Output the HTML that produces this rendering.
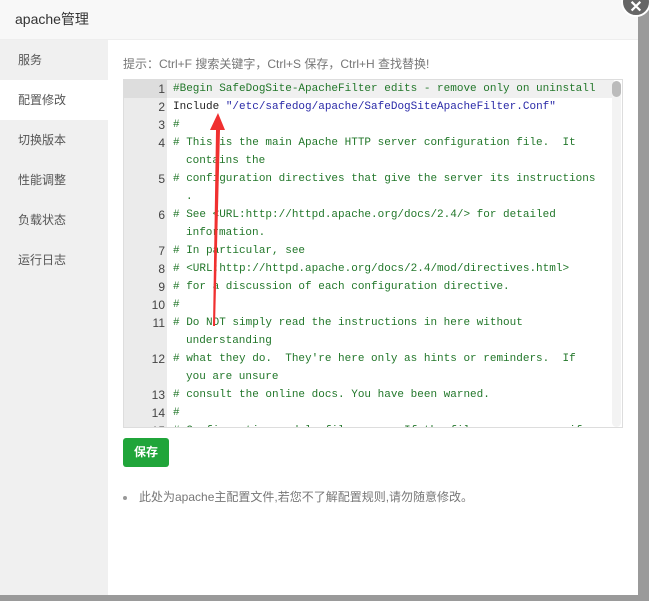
<!DOCTYPE html>
<html><head><meta charset="utf-8"><style>
*{margin:0;padding:0;box-sizing:border-box}
body{width:649px;height:601px;overflow:hidden;background:#9a9a9a;font-family:"Liberation Sans","Noto Sans CJK SC",sans-serif;position:relative}
.win{position:absolute;left:0;top:0;width:638px;height:595px;background:#fff}
.hd{height:40px;background:#f8f8f8;border-bottom:1px solid #eee;font-size:14px;color:#333;line-height:39px;padding-left:15px}
.side{position:absolute;left:0;top:40px;width:108px;bottom:0;background:#f0f0f0}
.side div{height:40px;line-height:40px;padding-left:18px;font-size:12px;color:#555}
.side .on{background:#fff}
.tip{position:absolute;left:123px;top:55px;font-size:12px;color:#777}
.ed{position:absolute;left:123px;top:79px;width:500px;height:349px;border:1px solid #ddd;overflow:hidden;background:#fff}
.gut{position:absolute;left:0;top:0;width:43px;height:100%;background:#ebebeb}
.code{position:absolute;left:0;top:0;font-family:"Liberation Mono",monospace;font-size:11px;line-height:18px;width:490px}
.l{position:relative;padding-left:49px;color:#22772a;white-space:pre-wrap}
.l .n{position:absolute;left:0;width:41px;text-align:right;color:#444;font-family:"Liberation Sans",sans-serif;font-size:12px}
.w{padding-left:62px}
.act{background:#f0f0f0}
.act .n{background:#ddd;width:43px;padding-right:2px}
.sb{position:absolute;right:1px;top:1px;width:9px;height:346px;background:#f3f3f3;border-radius:5px}
.sb i{display:block;height:16px;background:#bbb;border-radius:5px}
.btn{position:absolute;left:123px;top:438px;width:46px;height:29px;background:#20a53a;border-radius:3px;color:#fff;font-size:12px;font-weight:bold;text-align:center;line-height:29px}
.note{position:absolute;left:123px;top:488px;font-size:12px;color:#777}
.note b{display:inline-block;width:4px;height:4px;background:#999;border-radius:2px;margin-right:12px;vertical-align:middle}
.x{position:absolute;left:621px;top:-13px;width:30px;height:30px;border-radius:50%;background:#666;border:2px solid #fff;color:#fff;font-size:16px;line-height:38px;text-align:center;font-weight:bold}
</style></head><body>
<div class="win">
<div class="hd">apache管理</div>
<div class="side"><div>服务</div><div class="on">配置修改</div><div>切换版本</div><div>性能调整</div><div>负载状态</div><div>运行日志</div></div>
<div class="tip">提示：Ctrl+F 搜索关键字，Ctrl+S 保存，Ctrl+H 查找替换!</div>
<div class="ed"><div class="gut"></div>
<div class="code">
<div class="l act" style="margin-top:0"><span class="n">1</span>#Begin SafeDogSite-ApacheFilter edits - remove only on uninstall</div>
<div class="l" style="color:#222"><span class="n">2</span>Include <span style="color:#2a2aa8">"/etc/safedog/apache/SafeDogSiteApacheFilter.Conf"</span></div>
<div class="l"><span class="n">3</span>#</div>
<div class="l"><span class="n">4</span># This is the main Apache HTTP server configuration file.  It</div>
<div class="l w">contains the</div>
<div class="l"><span class="n">5</span># configuration directives that give the server its instructions</div>
<div class="l w">.</div>
<div class="l"><span class="n">6</span># See &lt;URL:http://httpd.apache.org/docs/2.4/&gt; for detailed</div>
<div class="l w">information.</div>
<div class="l"><span class="n">7</span># In particular, see</div>
<div class="l"><span class="n">8</span># &lt;URL:http://httpd.apache.org/docs/2.4/mod/directives.html&gt;</div>
<div class="l"><span class="n">9</span># for a discussion of each configuration directive.</div>
<div class="l"><span class="n">10</span>#</div>
<div class="l"><span class="n">11</span># Do NOT simply read the instructions in here without</div>
<div class="l w">understanding</div>
<div class="l"><span class="n">12</span># what they do.  They're here only as hints or reminders.  If</div>
<div class="l w">you are unsure</div>
<div class="l"><span class="n">13</span># consult the online docs. You have been warned.</div>
<div class="l"><span class="n">14</span>#</div>
<div class="l"><span class="n">15</span># Configuration and logfile names: If the filenames you specify</div>
</div>
<div class="sb"><i></i></div>
</div>
<div class="btn">保存</div>
<div class="note"><b></b>此处为apache主配置文件,若您不了解配置规则,请勿随意修改。</div>
</div>
<div class="x">✕</div>
<svg style="position:absolute;left:0;top:0" width="649" height="601"><polygon points="213,326 215,326 220,130 225,130 218,113 210,130 216,130" fill="#f03030"/></svg>
</body></html>
